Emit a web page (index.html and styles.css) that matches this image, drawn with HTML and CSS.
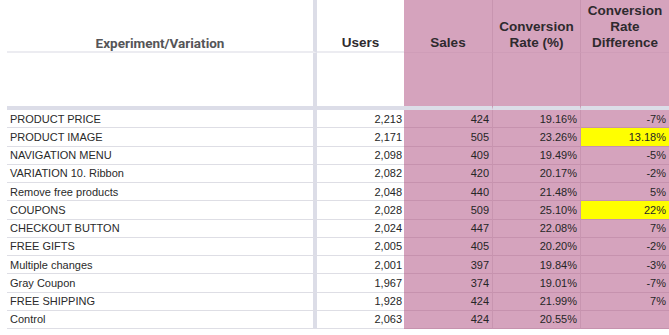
FILE: index.html
```html
<!DOCTYPE html>
<html>
<head>
<meta charset="utf-8">
<link rel="stylesheet" href="styles.css">
</head>
<body>
<table class="sheet">
  <colgroup>
    <col class="c-name"><col class="c-users"><col class="c-sales"><col class="c-rate"><col class="c-diff">
  </colgroup>
  <thead>
    <tr class="head">
      <th class="name hname">Experiment/Variation</th>
      <th class="users">Users</th>
      <th class="pink">Sales</th>
      <th class="pink">Conversion<br>Rate (%)</th>
      <th class="pink">Conversion<br>Rate<br>Difference</th>
    </tr>
    <tr class="blank">
      <td class="name"></td><td class="users"></td><td class="pink"></td><td class="pink"></td><td class="pink"></td>
    </tr>
  </thead>
  <tbody>
    <tr><td class="name">PRODUCT PRICE</td><td class="users">2,213</td><td class="pink">424</td><td class="pink">19.16%</td><td class="pink">-7%</td></tr>
    <tr><td class="name">PRODUCT IMAGE</td><td class="users">2,171</td><td class="pink">505</td><td class="pink">23.26%</td><td class="pink hl">13.18%</td></tr>
    <tr><td class="name">NAVIGATION MENU</td><td class="users">2,098</td><td class="pink">409</td><td class="pink">19.49%</td><td class="pink">-5%</td></tr>
    <tr><td class="name">VARIATION 10. Ribbon</td><td class="users">2,082</td><td class="pink">420</td><td class="pink">20.17%</td><td class="pink">-2%</td></tr>
    <tr><td class="name">Remove free products</td><td class="users">2,048</td><td class="pink">440</td><td class="pink">21.48%</td><td class="pink">5%</td></tr>
    <tr><td class="name">COUPONS</td><td class="users">2,028</td><td class="pink">509</td><td class="pink">25.10%</td><td class="pink hl">22%</td></tr>
    <tr><td class="name">CHECKOUT BUTTON</td><td class="users">2,024</td><td class="pink">447</td><td class="pink">22.08%</td><td class="pink">7%</td></tr>
    <tr><td class="name">FREE GIFTS</td><td class="users">2,005</td><td class="pink">405</td><td class="pink">20.20%</td><td class="pink">-2%</td></tr>
    <tr><td class="name">Multiple changes</td><td class="users">2,001</td><td class="pink">397</td><td class="pink">19.84%</td><td class="pink">-3%</td></tr>
    <tr><td class="name">Gray Coupon</td><td class="users">1,967</td><td class="pink">374</td><td class="pink">19.01%</td><td class="pink">-7%</td></tr>
    <tr><td class="name">FREE SHIPPING</td><td class="users">1,928</td><td class="pink">424</td><td class="pink">21.99%</td><td class="pink">7%</td></tr>
    <tr><td class="name">Control</td><td class="users">2,063</td><td class="pink">424</td><td class="pink">20.55%</td><td class="pink"></td></tr>
  </tbody>
</table>
</body>
</html>
```

FILE: styles.css
```css
html, body {
  margin: 0;
  padding: 0;
  background: #ffffff;
}
.sheet {
  margin-left: 7px;
  width: 662px;
  table-layout: fixed;
  border-collapse: separate;
  border-spacing: 0;
  font-family: "Liberation Sans", Arial, sans-serif;
  font-size: 11px;
  color: #262626;
}
.c-name { width: 310px; }
.c-users { width: 87px; }
.c-sales { width: 88px; }
.c-rate { width: 88px; }
.c-diff { width: 89px; }

.sheet th, .sheet td {
  box-sizing: border-box;
  padding: 0;
  overflow: hidden;
  white-space: nowrap;
}
.name {
  border-right: 4px solid #dcdde7;
  text-align: left;
}
.users { text-align: right; }
.pink {
  background: #d5a3bd;
  border-left: 1px solid #c895b0;
  text-align: right;
}
.users + .pink { border-left: none; }

.head th {
  height: 53px;
  vertical-align: bottom;
  text-align: center;
  font-size: 13.5px;
  line-height: 16px;
  font-weight: bold;
  color: #2e2a2e;
  padding-bottom: 0;
  border-bottom: 2px solid #ececf1;
}
.head th.pink {
  border-bottom: 1px solid #cf9db8;
  padding-bottom: 1px;
}
.head th.hname {
  font-family: Roboto, "Liberation Sans", sans-serif;
  font-size: 13.5px;
  color: #555558;
  text-align: center;
}
.blank td {
  height: 57px;
  border-bottom: 4px solid #dcdde8;
}

tbody td {
  height: 18.25px;
  line-height: 16px;
  border-bottom: 1px solid #dedee5;
  vertical-align: middle;
}
tbody td.pink {
  border-bottom: 1px solid #c692ae;
}
tbody td.name { padding-left: 3px; color: #2a2a2a; }
tbody td.users { padding-right: 2px; }
tbody td.pink { padding-right: 3px; }
tbody td.hl { background: #ffff00; }
```
